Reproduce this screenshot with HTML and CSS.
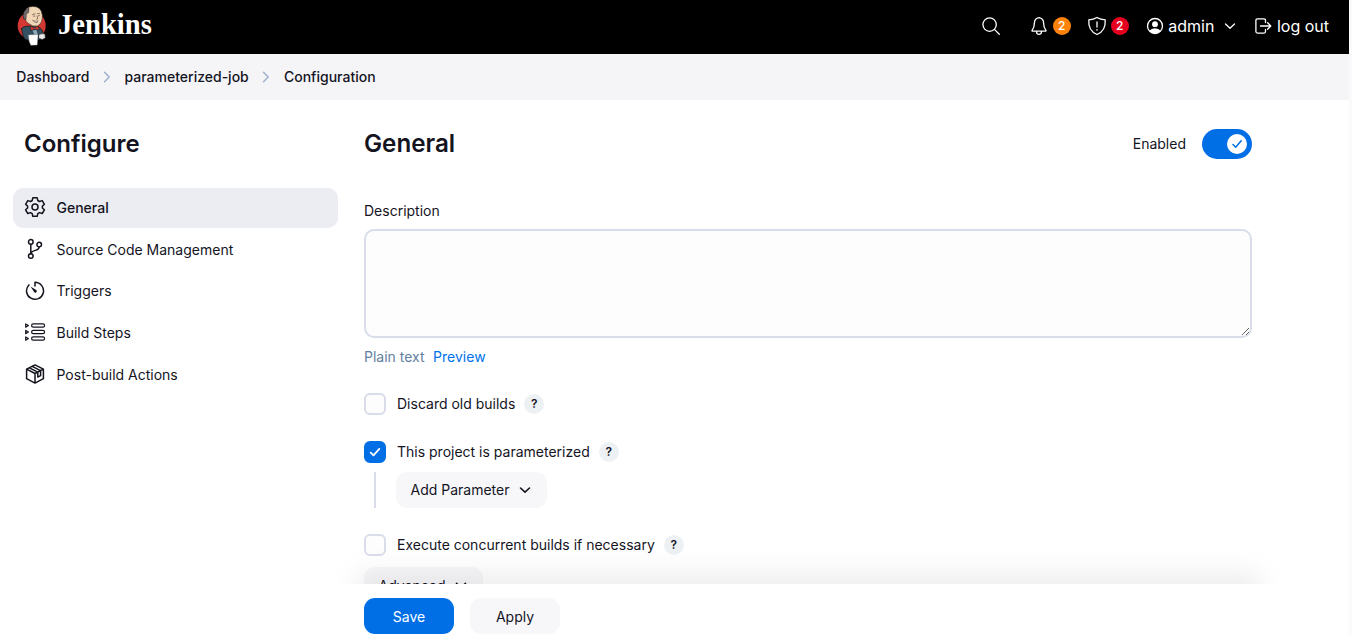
FILE: index.html
```html
<!DOCTYPE html>
<html lang="en">
<head>
<meta charset="utf-8">
<title>parameterized-job Config [Jenkins]</title>
<link rel="stylesheet" href="styles.css">
</head>
<body>
<div class="page">
  <header class="header">
    <a class="brand">
      <svg class="brand-logo" width="30" height="40" viewBox="0 0 30 40">
        <circle cx="14.7" cy="19.7" r="14" fill="#d33833"/>
        <path d="M4.500 22.500Q6 20.500 11 20L20 20.500Q25 21.500 26.500 28L26 33.500 12 34.500 7.500 33Q5 28 4.500 22.500Z" fill="#335061" stroke="#111" stroke-width=".7"/>
        <path d="M7 8Q8 .6 16 .4 24.500.6 25.300 9 26 17 20.500 20 15.500 21 11.500 17.500 7 14 7 8Z" fill="#f0d6b7" stroke="#3a302b" stroke-width=".6"/>
        <path d="M6.500 12Q5 4.500 12 2.200L11.500 6.500 9.300 8 9 13.500Q7.500 14.500 6.500 12Z" fill="#6d6b6d" stroke="#231f20" stroke-width=".5"/>
        <path d="M15.500 8.600l2.500-.8M20.500 7.500l2.200.2M16.500 10.100h1.300M21.300 9.700h1.100M20 10l.9 2.600-1.200.5" fill="none" stroke="#5b4638" stroke-width=".7"/>
        <path d="M16 14.600q2.500 1.400 5 .2l-.8 1.800q-2.400.6-4.200-2Z" fill="#fff" stroke="#5b4638" stroke-width=".6"/>
        <path d="M13.500 20.300l4 1.800 4-2 .5 4-4-1-4 1.300Z" fill="#d33833" stroke="#111" stroke-width=".4"/>
        <path d="M15.500 24.500l4-.5 1 4-3 .5Z" fill="#8fa9b8"/>
        <path d="M11.500 29l9.500-.5-.8 10.500-6.500.2-1.500-4Z" fill="#fff" stroke="#999" stroke-width=".4"/>
        <path d="M22 28.500q3.500-1.500 6-.5l.3 4-3 1.500-3.300-1.200Z" fill="#e8e8e8" stroke="#222" stroke-width=".6"/>
      </svg>
      <span class="brand-name">Jenkins</span>
    </a>
    <div class="header-tools">
      <svg class="tool-search" width="20" height="20" viewBox="0 0 20 20"><circle cx="8.600" cy="8.600" r="6.700"/><path d="M13.400 13.400l4.900 4.900"/></svg>
      <span class="tool tool-bell">
        <svg width="20" height="20" viewBox="0 0 20 20"><path d="M10 1.700c-2.900.5-4.600 2.600-4.600 5.300 0 4-.9 5.600-2.200 7.100-.5.600-.1 1.100.5 1.100h12.600c.6 0 1-.5.5-1.100-1.300-1.500-2.200-3.100-2.200-7.100 0-2.700-1.700-4.800-4.600-5.300ZM7.500 15.200v.6a2.500 2.500 0 0 0 5 0v-.6"/></svg>
        <b class="badge badge-warn">2</b>
      </span>
      <span class="tool tool-shield">
        <svg width="20" height="20" viewBox="0 0 20 20"><path d="M10 1.500C7.500 3 4.800 3.700 1.800 3.900c-.5 6.500 1.200 11.700 8.200 14.600 7-2.900 8.700-8.100 8.200-14.600-3-.2-5.700-.9-8.200-2.400ZM10 6v5M10 13.600v.6"/></svg>
        <b class="badge badge-danger">2</b>
      </span>
      <span class="tool tool-user">
        <svg width="18" height="18" viewBox="0 0 18 18"><circle cx="9" cy="9" r="7.500"/><circle cx="9" cy="7.200" r="2.900" class="solid"/><path class="solid" d="M3.500 13.800Q5.200 11.300 9 11.300t5.500 2.500Q12.500 16.500 9 16.500t-5.500-2.700Z"/></svg>
        <span class="user-name">admin</span>
        <svg class="chev" width="12" height="12" viewBox="0 0 12 12"><path d="M1.500 4L6 8.300 10.500 4"/></svg>
      </span>
      <span class="tool tool-logout">
        <svg width="18" height="18" viewBox="0 0 18 18"><path d="M11.500 5.500V3.400q0-1.500-1.500-1.500H3.400q-1.500 0-1.500 1.500v11.200q0 1.500 1.500 1.500H10q1.500 0 1.500-1.500v-2.100M6.500 9h10.200M13.600 5.800L16.800 9l-3.200 3.200"/></svg>
        <span>log out</span>
      </span>
    </div>
  </header>

  <nav class="crumbs">
    <a class="crumb-dash">Dashboard</a>
    <svg width="10" height="12" viewBox="0 0 10 12"><path d="M2.500 1.300L7.200 6 2.500 10.700"/></svg>
    <a class="crumb-job">parameterized-job</a>
    <svg width="10" height="12" viewBox="0 0 10 12"><path d="M2.500 1.300L7.200 6 2.500 10.700"/></svg>
    <a>Configuration</a>
  </nav>

  <div class="columns">
    <aside class="side">
      <h1>Configure</h1>
      <ul class="tasks">
        <li class="task active">
          <svg width="22" height="22" viewBox="0 0 22 22"><circle cx="11" cy="11" r="3"/><path d="M8.800 1.800h4.400l.6 2.700 1.700 1 2.700-.9 2.200 3.700-2 1.800v1.900l2 1.800-2.200 3.700-2.700-.9-1.700 1-.6 2.700H8.800l-.6-2.700-1.700-1-2.700.9-2.200-3.700 2-1.800v-1.900l-2-1.800 2.200-3.700 2.700.9 1.700-1Z"/></svg>
          <span>General</span>
        </li>
        <li class="task">
          <svg width="22" height="22" viewBox="0 0 22 22"><circle cx="6.800" cy="3.900" r="2.300"/><circle cx="6.800" cy="18" r="2.300"/><circle cx="15.200" cy="6.600" r="2.300"/><path d="M6.800 6.200v9.500M15.200 8.900c0 4.600-7.400 2.300-8.200 6.500"/></svg>
          <span>Source Code Management</span>
        </li>
        <li class="task">
          <svg width="22" height="22" viewBox="0 0 22 22"><path d="M4.900 5.900A8.500 8.500 0 1 0 11 3.300V7"/><path class="ink" d="M6.500 7.500l5.700 3.400a1.500 1.500 0 1 1-2.100 2.100Z"/></svg>
          <span>Triggers</span>
        </li>
        <li class="task">
          <svg class="thin" width="22" height="22" viewBox="0 0 22 22"><rect x="7.600" y="2.800" width="13" height="3.400" rx="1.700"/><rect x="7.600" y="9.300" width="13" height="3.400" rx="1.700"/><rect x="7.600" y="15.800" width="13" height="3.400" rx="1.700"/><path d="M1.700 2.900l2.700 1.600-2.700 1.700ZM1.700 9.400l2.700 1.600-2.700 1.700ZM1.700 15.900l2.700 1.600-2.700 1.700Z"/></svg>
          <span>Build Steps</span>
        </li>
        <li class="task">
          <svg width="22" height="22" viewBox="0 0 22 22"><path d="M11 1.900l8.400 4.300v9.500L11 20.100l-8.400-4.400V6.200ZM2.600 6.200L11 10.500l8.400-4.300M11 10.500v9.600M5.400 4.800l8.400 4.300v5l2.800-1.400V7.600L8.200 3.400"/></svg>
          <span>Post-build Actions</span>
        </li>
      </ul>
    </aside>

    <main class="main">
      <div class="section-head">
        <h2>General</h2>
        <div class="enable">
          <span>Enabled</span>
          <span class="toggle"><i class="knob"><svg width="12" height="12" viewBox="0 0 12 12"><path d="M2 6.500L4.700 9.200 10.200 2.800"/></svg></i></span>
        </div>
      </div>
      <label class="field-label" for="description">Description</label>
      <textarea id="description" class="description"></textarea>
      <div class="format"><span>Plain text</span><a>Preview</a></div>

      <div class="option option-discard">
        <i class="check"></i><span>Discard old builds</span><b class="help">?</b>
      </div>
      <div class="option option-param">
        <i class="check on"><svg width="12" height="12" viewBox="0 0 12 12"><path d="M1.700 6.600L4.500 9.300 10.300 2.900"/></svg></i><span>This project is parameterized</span><b class="help">?</b>
      </div>
      <div class="nested">
        <button class="btn btn-menu">Add Parameter <svg width="12" height="12" viewBox="0 0 12 12"><path d="M1.500 4L6 8.200 10.500 4"/></svg></button>
      </div>
      <div class="option option-exec">
        <i class="check"></i><span>Execute concurrent builds if necessary</span><b class="help">?</b>
      </div>
      <button class="btn btn-menu btn-adv">Advanced <svg width="12" height="12" viewBox="0 0 12 12"><path d="M1.500 3.400L6 7.600 10.500 3.400"/></svg></button>
    </main>
  </div>

  <div class="shade"><div class="shade-cast"></div></div>
  <footer class="actions">
    <button class="btn primary">Save</button>
    <button class="btn">Apply</button>
  </footer>
</div>
</body>
</html>
```
FILE: styles.css
```css
* { box-sizing: border-box; }
body {
  margin: 0;
  background: #fafafa;
  color: #14141f;
  font: 14px/20px Inter, "Liberation Sans", sans-serif;
  overflow: hidden;
}
svg { fill: none; stroke: currentColor; stroke-width: 1.5; stroke-linecap: round; stroke-linejoin: round; flex: none; display: block; }
h1, h2, ul { margin: 0; padding: 0; }
.page { position: relative; width: 1349px; height: 635px; background: #fff; overflow: hidden; }

.header { height: 54px; background: #000; color: #fff; display: flex; justify-content: space-between; padding: 0 20px 0 17px; }
.brand { display: flex; align-items: flex-start; padding-top: 6px; gap: 11px; }
.brand-logo { stroke: none; }
.brand-name { font: bold 28.6px/38px "Liberation Serif", serif; }
.header-tools { display: flex; align-items: center; height: 52px; font-size: 16px; }
.header-tools svg { stroke-width: 1.3; }
.header-tools .solid { fill: #fff; stroke: none; }
.tool { display: flex; align-items: center; }
.tool-search { margin-right: 28px; }
.tool-bell { gap: 4px; margin-right: 16px; }
.tool-shield { gap: 4px; margin-right: 17px; }
.tool-user { gap: 4.5px; margin-right: 18px; }
.tool-user .chev { margin-left: 5px; }
.tool-logout { gap: 5px; }
.badge { width: 18px; height: 18px; border-radius: 50%; font-size: 12px; line-height: 18px; font-weight: 500; text-align: center; }
.badge-warn { background: #ff820a; }
.badge-danger { background: #e6001f; }

.crumbs { height: 46px; background: #f5f5f8; display: flex; align-items: center; padding-left: 16.3px; gap: 12.6px; font-weight: 500; font-size: 14px; }
.crumbs svg { color: #9eb1cb; }

.columns { display: grid; grid-template-columns: 351px 901px; }
.side { padding: 28px 13px 0; }
.side h1 { font-size: 24px; line-height: 32px; font-weight: 600; padding-left: 11px; }
.tasks { list-style: none; margin-top: 28px; display: grid; gap: 1.67px; }
.task { width: 325px; height: 40px; border-radius: 10px; display: flex; align-items: center; gap: 10.5px; padding: 0 11px; }
.task svg { position: relative; top: -1px; }
.task.active { background: #ecedf2; font-weight: 500; }
.task .ink { fill: currentColor; stroke: none; }
.task .thin { stroke-width: 1.2; }

.main { padding-left: 13px; }
.section-head { display: flex; justify-content: space-between; align-items: center; padding-top: 29px; height: 59px; }
.section-head h2 { font-size: 24.2px; line-height: 30px; font-weight: 600; }
.enable { display: flex; align-items: center; gap: 16px; }
.toggle { width: 50px; height: 30px; border-radius: 15px; background: #006fe6; padding: 5px; display: flex; justify-content: flex-end; }
.knob { width: 20px; height: 20px; border-radius: 50%; background: #fff; color: #006fe6; display: grid; place-items: center; }
.field-label { display: block; margin-top: 42px; height: 28px; }
.description { display: block; width: 888px; height: 109px; border: 2px solid #d9dde9; border-radius: 10px; background: #fdfdfd; resize: vertical; }
.format { display: flex; gap: 8.5px; margin-top: 9px; color: #6480a0; }
.format a { color: #0073eb; }

.option { display: flex; align-items: center; height: 22px; }
.option-discard { margin-top: 26px; }
.option-param { margin-top: 26px; }
.option-exec { margin-top: 26px; }
.check { width: 22px; height: 22px; border: 2px solid #d9dde9; border-radius: 6px; background: #fdfdfd; margin-right: 11px; display: grid; place-items: center; }
.check.on { background: #006fe6; border-color: #006fe6; color: #fff; }
.check svg { stroke-width: 1.8; }
.help { width: 20px; height: 20px; border-radius: 50%; background: #eef1f4; margin-left: 9px; font-size: 12px; line-height: 20px; font-weight: 600; text-align: center; }
.nested { margin: 9px 0 0 10px; border-left: 2px solid #d9dde9; padding-left: 20px; height: 36px; }

.btn { border: 0; width: 90px; height: 36px; border-radius: 11px; background: #f7f7f9; color: #14141f; font: inherit; padding: 0; }
.btn.primary { background: #006fe6; color: #fff; }
.btn-menu { width: 151px; display: flex; align-items: center; justify-content: center; gap: 10px; padding-right: 1px; }
.btn-menu svg { stroke-width: 1.6; }
.btn-adv { width: 119px; margin-top: 11px; padding-top: 1px; }

/* Sticky action bar and the shade it casts over the scrolled form */
.shade { position: absolute; left: 334px; top: 544px; width: 948px; height: 40px; overflow: hidden; }
.shade-cast { margin: 40px 22px 0; height: 60px; box-shadow: 0 -10px 30px rgba(0, 0, 0, .08); }
.actions { position: absolute; left: 0; right: 0; bottom: 0; height: 51px; background: #fff; display: flex; gap: 16px; padding: 14px 0 0 364px; }
.actions .btn { padding-top: 2px; }
```
